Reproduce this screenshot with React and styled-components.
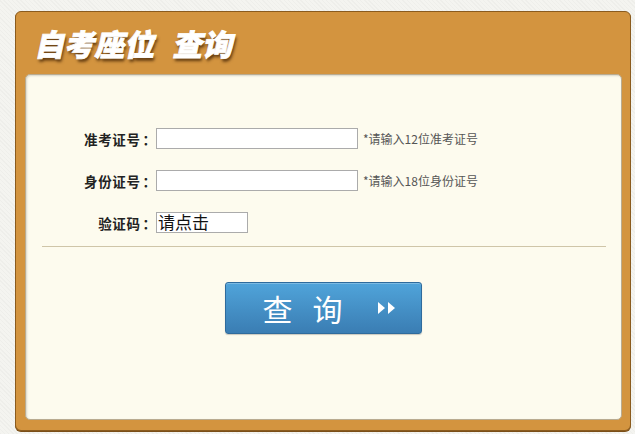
import React from 'react';
import styled, { createGlobalStyle } from 'styled-components';

const GlobalStyle = createGlobalStyle`
  html, body {
    margin: 0;
    padding: 0;
    background-color: #f4f4f0;
    background-image: repeating-linear-gradient(45deg, rgba(0,0,0,0.025) 0 1px, transparent 1px 3px);
    font-family: "Noto Sans CJK SC", "Noto Sans", sans-serif;
  }
  #root {
    padding: 11px 3px 3px 15px;
  }
`

const Panel = styled.div`
  width: 616px;
  height: 420px;
  box-sizing: border-box;
  background-color: #d3943f;
  border: 1px solid #8a5b1e;
  border-radius: 6px;
  box-shadow: 0 1px 0 #7a4e18;
  display: flex;
  flex-direction: column;
  padding: 0 8px 10px 9px;
`

const Header = styled.div`
  height: 62px;
  display: flex;
  align-items: center;
  padding-left: 12px;
`

const Title = styled.h1`
  margin: 0;
  font-size: 30px;
  font-weight: 900;
  color: #fff;
  transform: skewX(-12deg);
  -webkit-text-stroke: 0.8px #fff;
  text-shadow: 2px 3px 3px rgba(60, 30, 0, 0.75);
  span { margin-left: 18px; }
`

const Body = styled.div`
  flex: 1;
  background-color: #fdfbee;
  border: 1px solid #b9ab90;
  border-radius: 5px;
  box-shadow: inset 1px 1px 2px rgba(0,0,0,0.15);
  padding-top: 53px;
  display: flex;
  flex-direction: column;
`

const Row = styled.div`
  display: flex;
  align-items: center;
  height: 21px;
  margin-bottom: 21px;
`

const Label = styled.label`
  width: 130px;
  flex-shrink: 0;
  text-align: right;
  font-size: 13.5px;
  font-weight: bold;
  color: #222;
  letter-spacing: 0.6px;

  b {
    font-weight: bold;
    margin-left: 2px;
    letter-spacing: 0;
  }
`

const Input = styled.input`
  width: 202px;
  height: 21px;
  box-sizing: border-box;
  border: 1px solid #ababab;
  background: #fff;
  padding: 0 3px;
  margin: 0;
  outline: none;
`

const Hint = styled.span`
  margin-left: 5px;
  font-size: 12px;
  color: #555;
`

const Captcha = styled.div`
  width: 92px;
  height: 21px;
  box-sizing: border-box;
  border: 1px solid #ababab;
  background: #fff;
  font-size: 17px;
  line-height: 18px;
  color: #111;
  padding-left: 1px;
  cursor: pointer;
`

const Divider = styled.hr`
  margin: -8px 15px 0 16px;
  border: none;
  border-top: 1px solid #cfc5a8;
  height: 0;
`

const ButtonWrap = styled.div`
  display: flex;
  justify-content: center;
  padding-top: 35px;
`

const QueryButton = styled.button`
  width: 197px;
  height: 52px;
  display: flex;
  align-items: center;
  justify-content: center;
  gap: 14px;
  border: 1px solid #2f6b9c;
  border-radius: 3px;
  background: linear-gradient(#50a4da, #3a7db3);
  box-shadow: inset 0 1px 0 rgba(255,255,255,0.25), 0 1px 1px rgba(0,0,0,0.2);
  color: #fff;
  font-family: "Noto Sans CJK SC", sans-serif;
  font-size: 30px;
  letter-spacing: 20px;
  padding: 0 0 0 12px;
  cursor: pointer;
`

const Arrows = () => (
  <svg width="20" height="14" viewBox="0 0 20 14">
    <polygon points="1,1 8,7 1,13" fill="#fff" />
    <polygon points="11,1 18,7 11,13" fill="#fff" />
  </svg>
)

export default function App() {
  return (
    <>
      <GlobalStyle />
      <Panel>
        <Header>
          <Title>自考座位<span>查询</span></Title>
        </Header>
        <Body>
          <Row>
            <Label>准考证号<b>：</b></Label>
            <Input type="text" />
            <Hint>*请输入12位准考证号</Hint>
          </Row>
          <Row>
            <Label>身份证号<b>：</b></Label>
            <Input type="text" />
            <Hint>*请输入18位身份证号</Hint>
          </Row>
          <Row>
            <Label>验证码<b>：</b></Label>
            <Captcha>请点击</Captcha>
          </Row>
          <Divider />
          <ButtonWrap>
            <QueryButton type="button">
              <span>查询</span>
              <Arrows />
            </QueryButton>
          </ButtonWrap>
        </Body>
      </Panel>
    </>
  )
}
